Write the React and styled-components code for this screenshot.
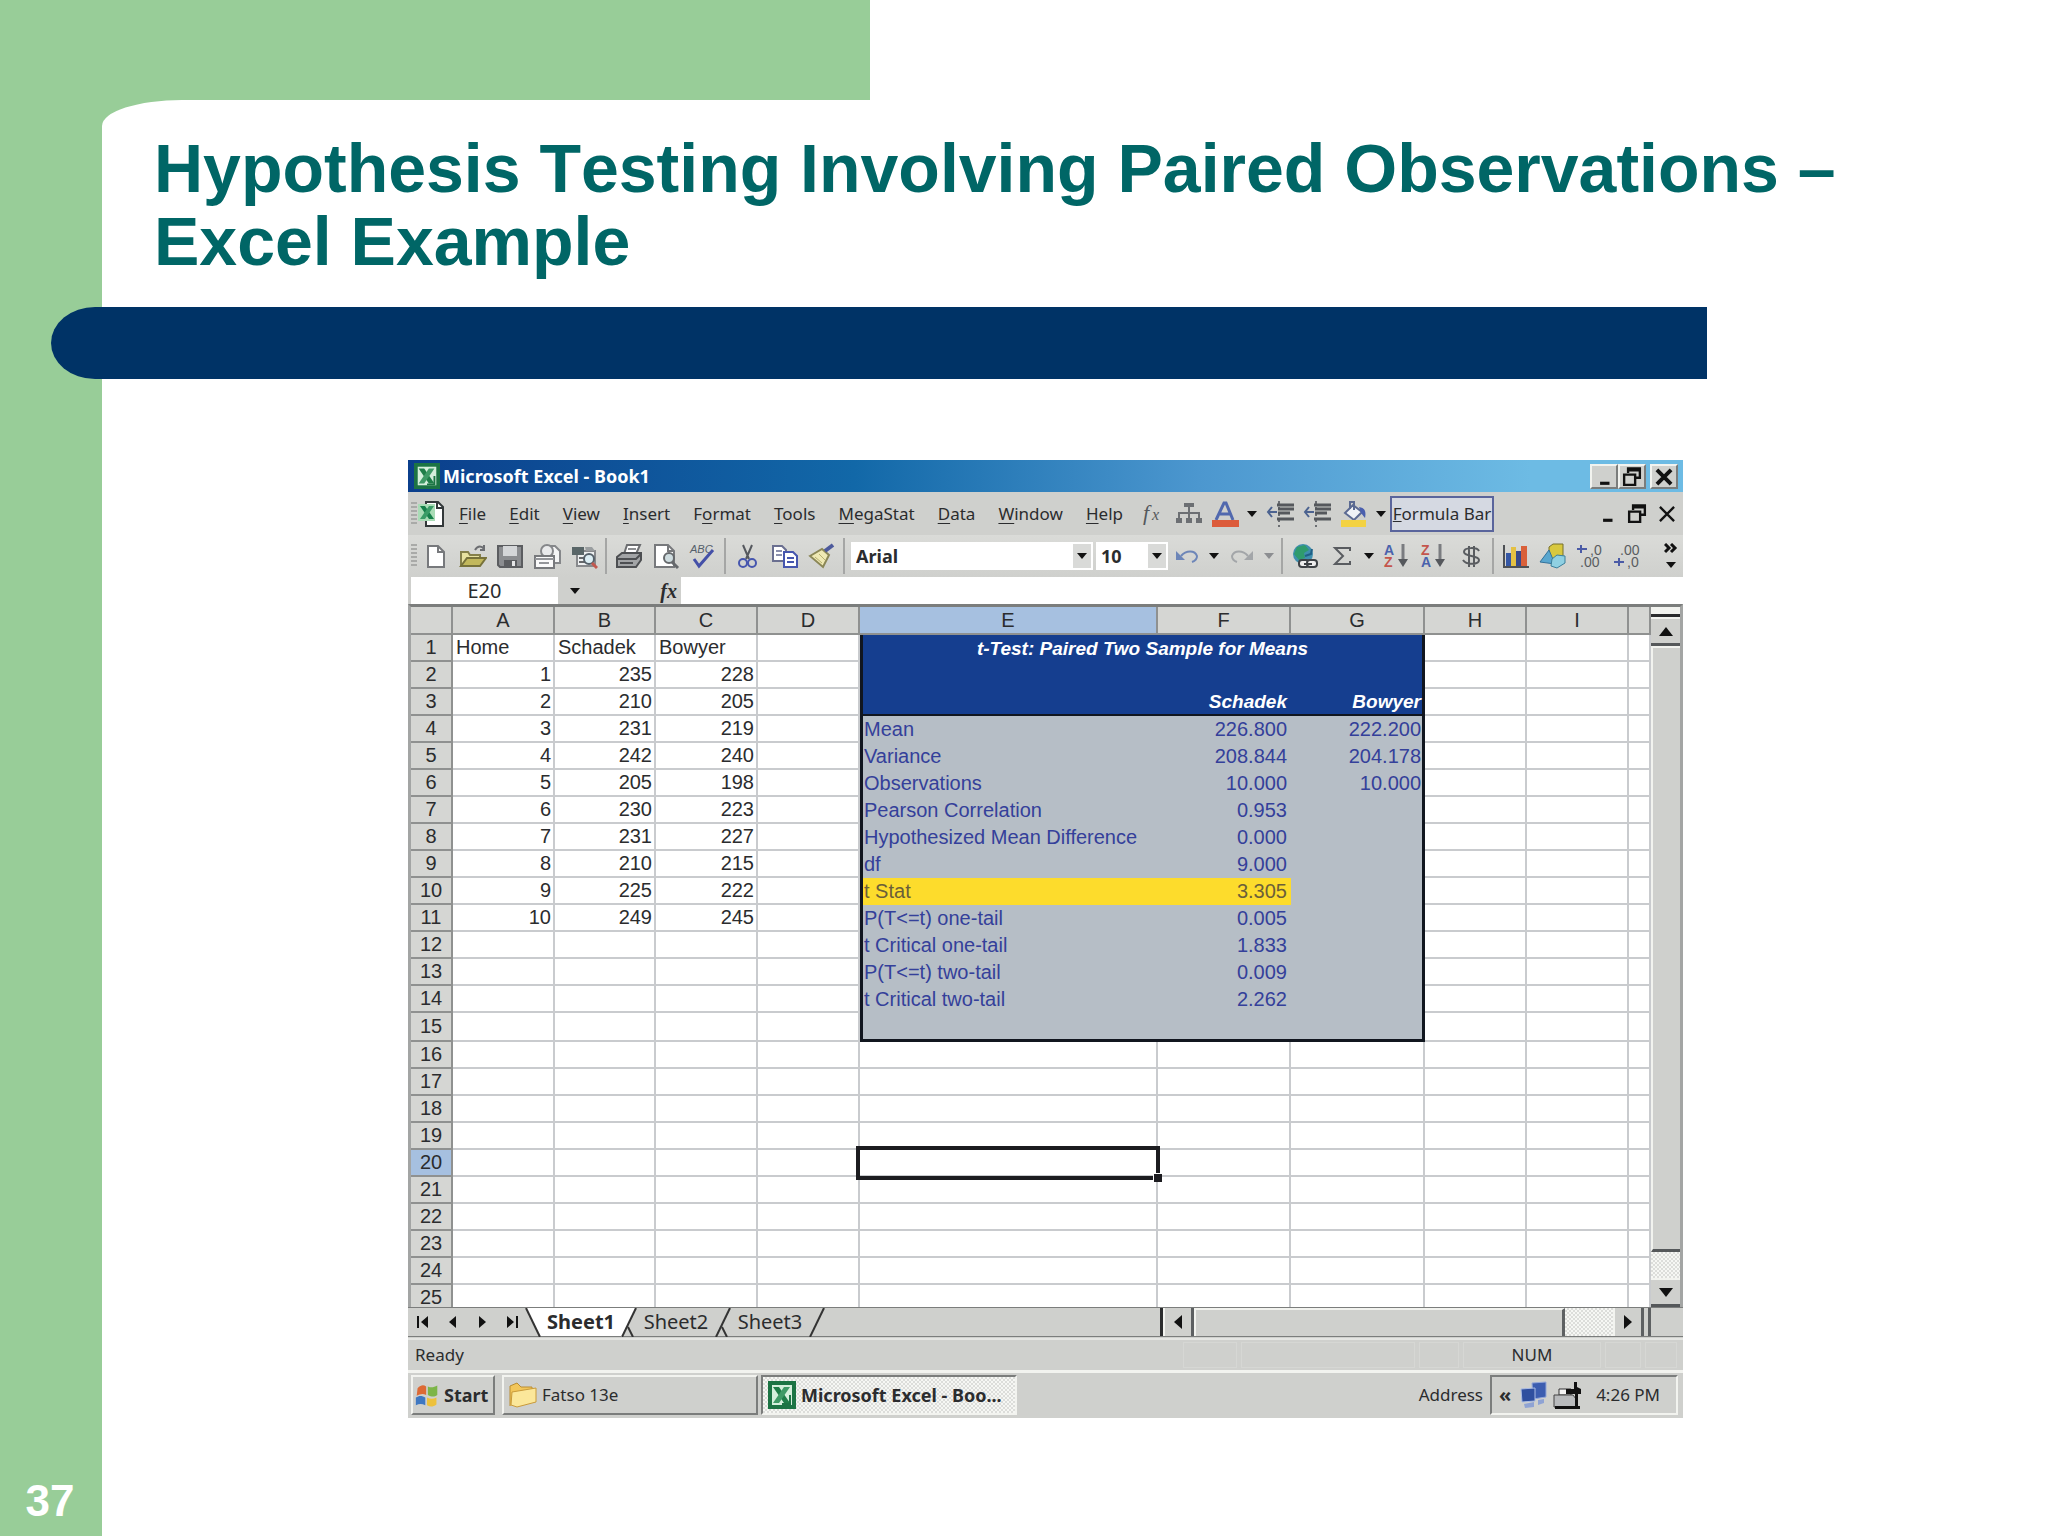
import { Fragment } from "react";
import styled, { createGlobalStyle, css } from "styled-components";

const c = {
  green: "#98cd98",
  navy: "#003366",
  teal: "#006666",
  face: "#cfd0cd",
  light: "#f2f3ef",
  shadow: "#7b7d7c",
  dark: "#2b2c2e",
  line: "#c9cbce",
  blue: "#153e8f",
  steel: "#b6bec6",
  ink: "#34409a",
  yellow: "#fddc2c",
};
const ui = `"Noto Sans", "Open Sans", sans-serif`;
const arial = `"Liberation Sans", Arial, sans-serif`;

const columns = [
  ["A", 102],
  ["B", 101],
  ["C", 102],
  ["D", 102],
  ["E", 298],
  ["F", 133],
  ["G", 134],
  ["H", 102],
  ["I", 102],
];

const scores = [
  ["Home", "Schadek", "Bowyer"],
  [1, 235, 228],
  [2, 210, 205],
  [3, 231, 219],
  [4, 242, 240],
  [5, 205, 198],
  [6, 230, 223],
  [7, 231, 227],
  [8, 210, 215],
  [9, 225, 222],
  [10, 249, 245],
];

// rows 2 to 15 of the t-test output, columns E, F and G
const report = [
  ["", "", ""],
  ["", "Schadek", "Bowyer"],
  ["Mean", "226.800", "222.200"],
  ["Variance", "208.844", "204.178"],
  ["Observations", "10.000", "10.000"],
  ["Pearson Correlation", "0.953", ""],
  ["Hypothesized Mean Difference", "0.000", ""],
  ["df", "9.000", ""],
  ["t Stat", "3.305", ""],
  ["P(T<=t) one-tail", "0.005", ""],
  ["t Critical one-tail", "1.833", ""],
  ["P(T<=t) two-tail", "0.009", ""],
  ["t Critical two-tail", "2.262", ""],
  ["", "", ""],
];

const menus = [
  ["", "F", "ile"],
  ["", "E", "dit"],
  ["", "V", "iew"],
  ["", "I", "nsert"],
  ["F", "o", "rmat"],
  ["", "T", "ools"],
  ["", "M", "egaStat"],
  ["", "D", "ata"],
  ["", "W", "indow"],
  ["", "H", "elp"],
];

/* ---------- icons ---------- */

const Icon = ({ size = 28, children }) => (
  <svg width={size} height={size} viewBox="0 0 28 28" fill="none" aria-hidden="true">
    {children}
  </svg>
);

const ExcelIcon = ({ size }) => (
  <Icon size={size}>
    <path d="M0 0h28v28H0z" fill="#1c7444" />
    <path d="M4 4h20v20H4z" fill="#d5efdc" />
    <path d="M5 6h6l11 16h-6z" fill="#1f7d48" />
    <path d="M16 6h6L11 22H5z" fill="#3f9a66" />
    <path d="M22 14v9h-8" stroke="#1c7444" strokeWidth="2" />
  </Icon>
);

const BookIcon = () => (
  <Icon>
    <path d="M9 2h12l5 5v19H9z" fill="#fff" stroke="#33383a" strokeWidth="2" />
    <path d="M20 2v6h6" stroke="#33383a" strokeWidth="2" />
    <path d="M1 4h17v17H1z" fill="#a9dcb6" />
    <path d="M3 6h5l9 13h-5z" fill="#16804a" />
    <path d="M12 6h5L8 19H3z" fill="#3a9c67" />
  </Icon>
);

const NewIcon = () => (
  <Icon>
    <path d="M6 4h10l6 6v15H6z" fill="#fff" stroke="#77797c" strokeWidth="2" />
    <path d="M16 4v6h6" stroke="#77797c" strokeWidth="2" />
  </Icon>
);

const OpenIcon = () => (
  <Icon>
    <path d="M2 24V10h7l2 3h10v4" fill="#e8e2a0" stroke="#85804a" strokeWidth="2" />
    <path d="M2 24l6-8h19l-6 8z" fill="#c2b85c" stroke="#77723a" strokeWidth="2" />
    <path d="M16 8c3-5 7-4 9-1m0-4v5h-4" stroke="#6c6e72" strokeWidth="2" />
  </Icon>
);

const SaveIcon = () => (
  <Icon>
    <path d="M2 4h24v21H4l-2-2z" fill="#8b8d90" stroke="#5b5d60" strokeWidth="2" />
    <path d="M7 4h14v10H7z" fill="#d4d6d8" />
    <path d="M8 18h13v7H8z" fill="#5c5e61" />
    <path d="M16 19h3v5h-3z" fill="#e6e7e8" />
  </Icon>
);

const MailIcon = () => (
  <Icon>
    <path d="M12 4h10l5 5v12H12z" fill="#f4f5f5" stroke="#85878a" strokeWidth="2" />
    <circle cx="14" cy="9" r="6" fill="#e9eaeb" stroke="#85878a" strokeWidth="2" />
    <path d="M2 14h19v12H2z" fill="#fafafa" stroke="#77797c" strokeWidth="2" />
    <path d="M2 17h19M6 21h10" stroke="#94969a" strokeWidth="2" />
  </Icon>
);

const SearchIcon = () => (
  <Icon>
    <path d="M7 9h18v15H7z" fill="#eef0f1" stroke="#87898c" strokeWidth="2" />
    <path d="M2 5h12v8H2z" fill="#596668" />
    <path d="M15 5h7l3 4h-9z" fill="#9a9ea0" />
    <path d="M9 16h6M9 20h6" stroke="#66696c" strokeWidth="2" />
    <circle cx="19" cy="17" r="5" fill="#dceef4" stroke="#55616a" strokeWidth="2" />
    <path d="M22 21l5 5" stroke="#c2584f" strokeWidth="3" />
  </Icon>
);

const PrintIcon = () => (
  <Icon>
    <path d="M9 12l3-9h13l-4 9z" fill="#fff" stroke="#6b6d70" strokeWidth="2" />
    <path d="M13 7h8" stroke="#8b8d90" strokeWidth="2" />
    <path d="M2 15l5-4h19v7l-5 7H2z" fill="#a2a4a6" stroke="#4d4f52" strokeWidth="2" />
    <path d="M2 17h19l5-5M5 21h13" stroke="#4d4f52" strokeWidth="2" />
  </Icon>
);

const PreviewIcon = () => (
  <Icon>
    <path d="M3 3h13l6 6v16H3z" fill="#fff" stroke="#77797c" strokeWidth="2" />
    <path d="M16 3v6h6" stroke="#77797c" strokeWidth="2" />
    <circle cx="17" cy="16" r="5" fill="#cfdde0" stroke="#66696c" strokeWidth="2" />
    <path d="M20 20l6 6" stroke="#66696c" strokeWidth="3" />
  </Icon>
);

const SpellIcon = () => (
  <Icon>
    <text x="1" y="11" fontFamily={arial} fontSize="11" fontStyle="italic" fill="#55606c">
      ABC
    </text>
    <path d="M5 17l5 7L24 8" stroke="#4450a8" strokeWidth="3" />
  </Icon>
);

const CutIcon = () => (
  <Icon>
    <path d="M9 3l6 14M18 3l-6 14" stroke="#55585e" strokeWidth="2" />
    <circle cx="9" cy="21" r="4" stroke="#4656ae" strokeWidth="2" />
    <circle cx="18" cy="21" r="4" stroke="#4656ae" strokeWidth="2" />
  </Icon>
);

const CopyIcon = () => (
  <Icon>
    <path d="M2 4h9l4 4v11H2z" fill="#fff" stroke="#6a6f90" strokeWidth="2" />
    <path d="M5 9h6M5 13h6" stroke="#8a8fac" strokeWidth="2" />
    <path d="M13 10h9l4 4v11H13z" fill="#fff" stroke="#4656ae" strokeWidth="2" />
    <path d="M16 16h7M16 20h7" stroke="#4656ae" strokeWidth="2" />
  </Icon>
);

const PainterIcon = () => (
  <Icon>
    <path d="M2 14l12-7 7 6-6 12z" fill="#efe9b4" stroke="#8b8757" strokeWidth="2" />
    <path d="M7 15l7 6M11 12l6 6" stroke="#b7b070" strokeWidth="1" />
    <path d="M17 9l8-6" stroke="#4d5a9c" strokeWidth="4" />
  </Icon>
);

const UndoIcon = ({ color = "#6d86b8", flip }) => (
  <Icon>
    <g transform={flip ? "translate(28 0) scale(-1 1)" : undefined}>
      <path d="M8 14c5-6 14-6 16 0 0 3-2 5-5 6" stroke={color} strokeWidth="2" />
      <path d="M3 9v9h9z" fill={color} />
    </g>
  </Icon>
);

const GlobeIcon = () => (
  <Icon>
    <circle cx="12" cy="12" r="10" fill="#3f8fae" />
    <path d="M6 5l8-2 4 5-5 3 1 5-6 2-5-6z" fill="#2f9b6d" />
    <path d="M14 14l6-2 1-5" stroke="#1f5f86" strokeWidth="2" />
    <rect x="8" y="18" width="10" height="7" rx="3" fill="#eee" stroke="#3d4145" strokeWidth="2" />
    <rect x="16" y="18" width="10" height="7" rx="3" fill="#eee" stroke="#3d4145" strokeWidth="2" />
    <path d="M13 22h8" stroke="#3d4145" strokeWidth="2" />
  </Icon>
);

const SigmaIcon = () => (
  <Icon>
    <path d="M22 9V6H7l8 8-8 8h15v-3" stroke="#595c60" strokeWidth="2" />
  </Icon>
);

const SortIcon = ({ top, bottom }) => (
  <Icon>
    <text x="1" y="13" fontFamily={arial} fontSize="14" fontWeight="700" fill={top === "A" ? "#4a62ac" : "#c4554c"}>
      {top}
    </text>
    <text x="1" y="25" fontFamily={arial} fontSize="14" fontWeight="700" fill={bottom === "A" ? "#4a62ac" : "#c4554c"}>
      {bottom}
    </text>
    <path d="M20 2v16" stroke="#7a7c80" strokeWidth="3" />
    <path d="M15 17h10l-5 8z" fill="#55585c" />
  </Icon>
);

const DollarIcon = () => (
  <Icon>
    <path d="M22 9c-2-4-15-4-15 1s15 3 15 8-13 5-16 0M12 4v21M17 4v21" stroke="#595c60" strokeWidth="2" />
  </Icon>
);

const ChartIcon = () => (
  <Icon>
    <path d="M2 3v22h25" stroke="#4d5054" strokeWidth="2" />
    <path d="M4 11h5v13H4z" fill="#3557a5" />
    <path d="M9 5h5v19H9z" fill="#e4c144" />
    <path d="M14 9h5v15h-5z" fill="#36498c" />
    <path d="M19 4h6v20h-6z" fill="#d9603a" />
  </Icon>
);

const ShapesIcon = () => (
  <Icon>
    <path d="M10 5l4-3h10v12l-3 3H10z" fill="#d8c83f" stroke="#77702c" />
    <path d="M1 20L10 8l6 14z" fill="#5aa7cf" stroke="#33719a" />
    <path d="M13 17l5-4 8 1v7l-8 5-6-2z" fill="#8fd0e2" stroke="#3b7f9b" />
  </Icon>
);

const DecimalIcon = ({ more }) => (
  <Icon>
    <g fontFamily={arial} fontSize="14" fill="#595c60">
      <text x={more ? 7 : 14} y="13">{more ? ".00" : ",0"}</text>
      <text x={more ? 14 : 4} y="25">{more ? ",0" : ".00"}</text>
    </g>
    <path d={more ? "M1 20h10M6 16v8" : "M1 7h10M5 3v8"} stroke="#4b5ba6" strokeWidth="2" />
  </Icon>
);

const FxIcon = () => (
  <Icon>
    <text x="6" y="20" fontFamily="Liberation Serif, serif" fontSize="22" fontStyle="italic" fill="#54585c">
      f
    </text>
    <text x="15" y="20" fontFamily="Liberation Serif, serif" fontSize="16" fontStyle="italic" fill="#54585c">
      x
    </text>
  </Icon>
);

const OrgIcon = () => (
  <Icon>
    <path d="M10 3h10v4H10zM2 18h6v5H2zM12 18h6v5h-6zM22 18h6v5h-6z" fill="#6c6f73" />
    <path d="M15 7v12M5 18v-5h20v5" stroke="#6c6f73" strokeWidth="2" />
  </Icon>
);

const FontColorIcon = () => (
  <Icon>
    <path d="M5 20L13 3h2l7 17M9 14h10" stroke="#5168ae" strokeWidth="3" />
    <path d="M1 20h27v7H1z" fill="#dc5b3b" />
  </Icon>
);

const IndentIcon = () => (
  <Icon>
    <path d="M13 1v26" stroke="#6c6f73" strokeWidth="2" strokeDasharray="3 3" />
    <path d="M11 5h17M12 9h16M12 13h12M11 19h17" stroke="#55585c" strokeWidth="3" />
    <path d="M2 12h9M6 7l-4 5 4 5" stroke="#4c6390" strokeWidth="2" />
  </Icon>
);

const BucketIcon = () => (
  <Icon>
    <path d="M5 13l8-8 9 7-8 8z" fill="#eff2f6" stroke="#5b6a92" strokeWidth="2" />
    <path d="M10 9V2h4v8" stroke="#5b6a92" strokeWidth="2" />
    <path d="M19 7c7 1 7 6 6 11l-4-5z" fill="#4a5fae" />
    <path d="M1 20h25v7H1z" fill="#f3d243" />
  </Icon>
);

const MinIcon = () => (
  <Icon size={22}>
    <path d="M9 22h12" stroke="#111" strokeWidth="4" />
  </Icon>
);

const RestoreIcon = () => (
  <Icon size={22}>
    <path d="M9 9V3h15v12h-6" stroke="#111" strokeWidth="3" />
    <path d="M9 5h15" stroke="#111" strokeWidth="4" />
    <path d="M4 11h14v13H4z" stroke="#111" strokeWidth="3" />
  </Icon>
);

const CloseIcon = ({ weight = 5 }) => (
  <Icon size={22}>
    <path d="M5 5l18 18M23 5L5 23" stroke="#111" strokeWidth={weight} />
  </Icon>
);

const StartIcon = () => (
  <Icon size={24}>
    <path d="M3 6c4-4 7-4 10-2v10c-4-2-7-1-11 1z" fill="#dd6a35" />
    <path d="M15 4c4 2 7 1 11-1v11c-4 3-7 2-11 0z" fill="#7db548" />
    <path d="M1 17c4-3 8-2 11 0v9c-4-2-7-2-11 0z" fill="#3f78c2" />
    <path d="M14 17c4 2 7 2 11 0v8c-4 3-7 3-11 1z" fill="#edc13c" />
  </Icon>
);

const FolderIcon = () => (
  <Icon>
    <path d="M1 25V5l7-3 4 4h11v5" fill="#f2c65a" stroke="#b98c31" />
    <path d="M3 11l24-4v14L8 26l-6-2z" fill="#fbe79a" stroke="#c99a3a" />
  </Icon>
);

const NetworkIcon = () => (
  <Icon>
    <path d="M12 2l14-1v15l-13 2z" fill="#3c5db0" stroke="#93a7d8" />
    <path d="M1 8l14-1v13L2 21z" fill="#2f4f9f" stroke="#a9bbe4" />
    <path d="M4 23l10-2v5l-9 1zM18 19l6-1v4l-6 2z" fill="#8fa3d4" />
  </Icon>
);

const TrayPrinterIcon = () => (
  <Icon>
    <path d="M6 8h12v6H6z" fill="#f4f4f4" stroke="#333" />
    <path d="M1 14h19l3 4v8H1z" fill="#b9bbbd" stroke="#444" />
    <path d="M2 25h25v3H2z" fill="#111" />
    <path d="M21 1h3v5l4 2v5h-3v12h-3V13h-9V8h8z" fill="#111" />
  </Icon>
);

const Arrow = ({ d, w = 12, h = 14 }) => (
  <svg width={w} height={h} viewBox={`0 0 ${w} ${h}`} aria-hidden="true">
    <path d={d} fill="#111" />
  </svg>
);

const Caret = ({ color = "#111" }) => (
  <svg width="10" height="6" viewBox="0 0 10 6" aria-hidden="true">
    <path d="M0 0h10L5 6z" fill={color} />
  </svg>
);

/* ---------- window parts ---------- */

function MenuBar() {
  return (
    <MenuRow>
      <Grip />
      <BookIcon />
      <MenuList>
        {menus.map(([before, key, after]) => (
          <MenuButton key={before + key + after}>
            {before}
            <u>{key}</u>
            {after}
          </MenuButton>
        ))}
      </MenuList>
      <ToolButton aria-label="Insert function"><FxIcon /></ToolButton>
      <ToolButton aria-label="Diagram"><OrgIcon /></ToolButton>
      <ToolButton aria-label="Font color"><FontColorIcon /></ToolButton>
      <CaretButton aria-label="Font color list"><Caret /></CaretButton>
      <ToolButton aria-label="Decrease indent"><IndentIcon /></ToolButton>
      <ToolButton aria-label="Increase indent"><IndentIcon /></ToolButton>
      <ToolButton aria-label="Fill color"><BucketIcon /></ToolButton>
      <CaretButton aria-label="Fill color list"><Caret /></CaretButton>
      <ActiveButton>
        <u>F</u>ormula Bar
      </ActiveButton>
      <BookControls>
        <PlainButton aria-label="Minimize book"><MinIcon /></PlainButton>
        <PlainButton aria-label="Restore book"><RestoreIcon /></PlainButton>
        <PlainButton aria-label="Close book"><CloseIcon weight={3} /></PlainButton>
      </BookControls>
    </MenuRow>
  );
}

function ToolBar() {
  return (
    <ToolRow>
      <Grip />
      <ToolButton aria-label="New"><NewIcon /></ToolButton>
      <ToolButton aria-label="Open"><OpenIcon /></ToolButton>
      <ToolButton aria-label="Save"><SaveIcon /></ToolButton>
      <ToolButton aria-label="E-mail"><MailIcon /></ToolButton>
      <ToolButton aria-label="Search"><SearchIcon /></ToolButton>
      <Separator />
      <ToolButton aria-label="Print"><PrintIcon /></ToolButton>
      <ToolButton aria-label="Print preview"><PreviewIcon /></ToolButton>
      <ToolButton aria-label="Spelling"><SpellIcon /></ToolButton>
      <Separator />
      <ToolButton aria-label="Cut"><CutIcon /></ToolButton>
      <ToolButton aria-label="Copy"><CopyIcon /></ToolButton>
      <ToolButton aria-label="Format painter"><PainterIcon /></ToolButton>
      <Separator />
      <Combo $width={242}>
        <select aria-label="Font" defaultValue="Arial">
          <option>Arial</option>
        </select>
        <span><Caret /></span>
      </Combo>
      <Combo $width={72}>
        <select aria-label="Font size" defaultValue="10">
          <option>10</option>
        </select>
        <span><Caret /></span>
      </Combo>
      <ToolButton aria-label="Undo"><UndoIcon /></ToolButton>
      <CaretButton aria-label="Undo list"><Caret /></CaretButton>
      <ToolButton aria-label="Redo"><UndoIcon flip color="#a3a6a9" /></ToolButton>
      <CaretButton aria-label="Redo list"><Caret color="#8c8e91" /></CaretButton>
      <Separator />
      <ToolButton aria-label="Insert hyperlink"><GlobeIcon /></ToolButton>
      <ToolButton aria-label="AutoSum"><SigmaIcon /></ToolButton>
      <CaretButton aria-label="AutoSum list"><Caret /></CaretButton>
      <ToolButton aria-label="Sort ascending"><SortIcon top="A" bottom="Z" /></ToolButton>
      <ToolButton aria-label="Sort descending"><SortIcon top="Z" bottom="A" /></ToolButton>
      <ToolButton aria-label="Currency style"><DollarIcon /></ToolButton>
      <Separator />
      <ToolButton aria-label="Chart wizard"><ChartIcon /></ToolButton>
      <ToolButton aria-label="Drawing"><ShapesIcon /></ToolButton>
      <ToolButton aria-label="Increase decimal"><DecimalIcon /></ToolButton>
      <ToolButton aria-label="Decrease decimal"><DecimalIcon more /></ToolButton>
      <MoreButton aria-label="Toolbar options">
        <svg width="14" height="26" viewBox="0 0 14 26" fill="none" aria-hidden="true">
          <path d="M1 1l4 4-4 4M7 1l4 4-4 4" stroke="#111" strokeWidth="3" />
          <path d="M2 19h10l-5 6z" fill="#111" />
        </svg>
      </MoreButton>
    </ToolRow>
  );
}

function ReportCells({ row }) {
  if (row === 1) {
    return (
      <ReportCell colSpan={3} $tone="head" $align="center" $left $right>
        t-Test: Paired Two Sample for Means
      </ReportCell>
    );
  }
  const tone = row <= 3 ? "head" : "body";
  const [label, first, second] = report[row - 2];
  const edge = { $rule: row === 3, $last: row === 15 };
  const hit = label === "t Stat";
  return (
    <>
      <ReportCell $tone={hit ? "hit" : tone} $left {...edge}>{label}</ReportCell>
      <ReportCell $tone={hit ? "hit" : tone} $align="right" {...edge}>{first}</ReportCell>
      <ReportCell $tone={tone} $align="right" $right {...edge}>{second}</ReportCell>
    </>
  );
}

function Grid() {
  const rows = Array.from({ length: 25 }, (_, i) => i + 1);
  return (
    <Viewport>
      <Table>
        <colgroup>
          <Col $width={42} />
          {columns.map(([name, width]) => (
            <Col key={name} $width={width} />
          ))}
          <col />
        </colgroup>
        <thead>
          <tr>
            <Head />
            {columns.map(([name]) => (
              <Head key={name} scope="col" $active={name === "E"}>{name}</Head>
            ))}
            <Head />
          </tr>
        </thead>
        <tbody>
          {rows.map((row) => (
            <Row key={row} $tall={row === 15}>
              <Head scope="row" $active={row === 20}>{row}</Head>
              {[0, 1, 2].map((i) => (
                <Cell key={i} $align={row > 1 ? "right" : "left"}>{scores[row - 1]?.[i]}</Cell>
              ))}
              <Cell />
              {row <= 15 ? (
                <ReportCells row={row} />
              ) : (
                <Fragment>
                  <Cell>{row === 20 && <Cursor />}</Cell>
                  <Cell />
                  <Cell />
                </Fragment>
              )}
              <Cell />
              <Cell />
              <Cell />
            </Row>
          ))}
        </tbody>
      </Table>
    </Viewport>
  );
}

const Slant = ({ first, last, active }) => (
  <svg width="16" height="29" viewBox="0 0 16 29" fill="none" aria-hidden="true">
    {first ? (
      <>
        <path d="M1 0h15v29z" fill="#fff" />
        <path d="M1 0l14 29" stroke="#333" strokeWidth="2" />
      </>
    ) : (
      <>
        {active && <path d="M0 0h15L1 29H0z" fill="#fff" />}
        <path d="M15 0L1 29" stroke="#333" strokeWidth="2" />
        {!last && <path d="M7 19l5 10" stroke="#333" strokeWidth="2" />}
      </>
    )}
  </svg>
);

function SheetBar() {
  return (
    <SheetRow>
      <SheetNav>
        <PlainButton aria-label="First sheet"><Arrow d="M0 1h2v12H0zM11 1v12L4 7z" /></PlainButton>
        <PlainButton aria-label="Previous sheet"><Arrow d="M9 1v12L2 7z" /></PlainButton>
        <PlainButton aria-label="Next sheet"><Arrow d="M3 1v12l7-6z" /></PlainButton>
        <PlainButton aria-label="Last sheet"><Arrow d="M10 1h2v12h-2zM1 1v12l7-6z" /></PlainButton>
      </SheetNav>
      <Slant first />
      <SheetTab $active>Sheet1</SheetTab>
      <Slant active />
      <SheetTab>Sheet2</SheetTab>
      <Slant />
      <SheetTab>Sheet3</SheetTab>
      <Slant last />
      <HScroll>
        <HButton aria-label="Scroll left"><Arrow d="M10 0v14L2 7z" /></HButton>
        <HThumb />
        <HTrack />
        <HButton aria-label="Scroll right"><Arrow d="M2 0v14l8-7z" /></HButton>
      </HScroll>
      <Corner />
    </SheetRow>
  );
}

export default function App() {
  return (
    <>
      <GlobalStyle />
      <Slide>
        <Rail>37</Rail>
        <Main>
          <Paper>
            <Title>Hypothesis Testing Involving Paired Observations – Excel Example</Title>
            <Bar />
            <Window>
              <TitleBar>
                <ExcelIcon size={26} />
                <strong>Microsoft Excel - Book1</strong>
                <WindowButton aria-label="Minimize"><MinIcon /></WindowButton>
                <WindowButton aria-label="Restore"><RestoreIcon /></WindowButton>
                <WindowButton aria-label="Close" $apart><CloseIcon /></WindowButton>
              </TitleBar>
              <MenuBar />
              <ToolBar />
              <FormulaRow>
                <NameBox aria-label="Name box" defaultValue="E20" />
                <FormulaTools>
                  <Caret />
                  <em>fx</em>
                </FormulaTools>
                <FormulaInput aria-label="Formula" />
              </FormulaRow>
              <Workspace>
                <Grid />
                <VScroll>
                  <Split />
                  <VButton aria-label="Scroll up"><Arrow w={14} h={9} d="M0 9h14L7 0z" /></VButton>
                  <VThumb />
                  <VTrack />
                  <VButton aria-label="Scroll down"><Arrow w={14} h={9} d="M0 0h14L7 9z" /></VButton>
                </VScroll>
              </Workspace>
              <SheetBar />
              <StatusRow>
                <span>Ready</span>
                <Pane $width={54} />
                <Pane $width={174} />
                <Pane $width={40} />
                <Pane $width={138}>NUM</Pane>
                <Pane $width={36} />
                <Pane $width={32} />
              </StatusRow>
              <TaskBar>
                <StartButton>
                  <StartIcon />
                  Start
                </StartButton>
                <TaskButton>
                  <FolderIcon />
                  Fatso 13e
                </TaskButton>
                <TaskButton $pressed>
                  <ExcelIcon />
                  Microsoft Excel - Boo...
                </TaskButton>
                <Address>Address</Address>
                <Tray>
                  <Chevrons>«</Chevrons>
                  <NetworkIcon />
                  <TrayPrinterIcon />
                  <time>4:26 PM</time>
                </Tray>
              </TaskBar>
            </Window>
          </Paper>
        </Main>
      </Slide>
    </>
  );
}

/* ---------- styles ---------- */

const GlobalStyle = createGlobalStyle`
  * {
    box-sizing: border-box;
  }
  body {
    margin: 0;
    background: #fff;
  }
  button, input, select {
    font: inherit;
    color: inherit;
    margin: 0;
    padding: 0;
    border: 0;
    background: none;
  }
  svg {
    display: block;
    flex: none;
  }
`;

const dots = css`
  background: repeating-conic-gradient(#dcddda 0 25%, #f6f7f4 0 50%) 0 0 / 4px 4px;
`;
const raised = css`
  background: ${c.face};
  border: 2px solid;
  border-color: ${c.light} ${c.shadow} ${c.shadow} ${c.light};
`;

const Slide = styled.div`
  display: grid;
  grid-template-columns: 102px 1fr;
  min-height: 100vh;
`;
const Rail = styled.aside`
  display: flex;
  align-items: flex-end;
  justify-content: center;
  padding: 0 2px 10px 0;
  background: ${c.green};
  color: #fff;
  font: 700 44px/50px ${arial};
`;
const Main = styled.main`
  padding-top: 100px;
  background: linear-gradient(${c.green}, ${c.green}) no-repeat 0 0 / 768px 140px;
`;
const Paper = styled.section`
  height: 100%;
  padding-top: 32px;
  background: #fff;
  border-top-left-radius: 80px 26px;
`;
const Title = styled.h1`
  margin: 0;
  padding: 0 150px 0 52px;
  color: ${c.teal};
  font: 700 68px/73px ${arial};
  font-kerning: none;
`;
const Bar = styled.div`
  height: 72px;
  margin: 29px 341px 81px -51px;
  background: ${c.navy};
  border-radius: 44px 0 0 44px / 36px;
`;

const Window = styled.div`
  margin: 0 365px 0 306px;
  background: ${c.face};
  color: ${c.dark};
  font: 17px/24px ${ui};
`;
const TitleBar = styled.header`
  display: flex;
  align-items: center;
  height: 32px;
  padding: 0 5px 0 6px;
  background: linear-gradient(90deg, #0b3f8c, #1268a8 35%, #4c97cf 62%, #6dbbe4 88%);
  color: #fff;
  strong {
    flex: 1;
    padding-left: 3px;
    font-size: 18px;
  }
`;
const WindowButton = styled.button`
  ${raised}
  display: grid;
  place-items: center;
  width: 28px;
  height: 25px;
  margin-left: ${(p) => (p.$apart ? 4 : 0)}px;
`;
const MenuRow = styled.nav`
  display: flex;
  align-items: center;
  height: 43px;
  padding: 0 5px 0 3px;
`;
const Grip = styled.span`
  flex: none;
  width: 6px;
  height: 24px;
  background: repeating-linear-gradient(#a9aaa8 0 2px, transparent 2px 4px);
`;
const MenuList = styled.div`
  display: flex;
  justify-content: space-between;
  width: 664px;
  margin: 0 9px 0 14px;
`;
const MenuButton = styled.button`
  text-underline-offset: 3px;
`;
const ToolButton = styled.button`
  display: flex;
  flex: none;
  align-items: center;
  justify-content: center;
  width: 37px;
  height: 36px;
`;
const CaretButton = styled(ToolButton)`
  width: 18px;
`;
const ActiveButton = styled.button`
  width: 104px;
  height: 36px;
  background: #d5d9e2;
  border: 2px solid #5a659c;
  white-space: nowrap;
`;
const BookControls = styled.div`
  display: flex;
  gap: 8px;
  margin-left: auto;
`;
const PlainButton = styled.button`
  display: grid;
  place-items: center;
`;
const ToolRow = styled.div`
  display: flex;
  align-items: center;
  height: 42px;
  padding: 0 5px 0 3px;
  background: linear-gradient(#dadbd8, ${c.face});
`;
const Separator = styled.span`
  flex: none;
  width: 2px;
  height: 36px;
  margin: 0 3px;
  background: #a5a6a5;
`;
const Combo = styled.div`
  display: flex;
  flex: none;
  width: ${(p) => p.$width}px;
  height: 28px;
  margin-left: 3px;
  padding: 2px;
  background: #fff;
  font-size: 18px;
  font-weight: 700;
  select {
    flex: 1;
    min-width: 0;
    padding-left: 3px;
    appearance: none;
  }
  span {
    display: grid;
    place-items: center;
    width: 18px;
    background: #d9dad8;
  }
`;
const MoreButton = styled(ToolButton)`
  width: 14px;
  margin-left: auto;
`;

const FormulaRow = styled.div`
  display: flex;
  height: 27px;
  padding-left: 3px;
  font-size: 20px;
`;
const NameBox = styled.input`
  width: 147px;
  background: #fff;
  text-align: center;
`;
const FormulaTools = styled.div`
  display: flex;
  align-items: center;
  justify-content: space-between;
  width: 123px;
  padding: 0 4px 0 12px;
  em {
    font: italic 700 20px/24px "Liberation Serif", serif;
  }
`;
const FormulaInput = styled.input`
  flex: 1;
  background: #fff;
`;

const Workspace = styled.div`
  display: flex;
  height: 703px;
  border: solid #a3a5a4;
  border-width: 3px 3px 0;
  border-top-color: #7b7d7c;
`;
const Viewport = styled.div`
  flex: 1;
  overflow: hidden;
`;
const Table = styled.table`
  width: 100%;
  table-layout: fixed;
  border-collapse: separate;
  border-spacing: 0;
  background: #fff;
  font: 20px/25px ${arial};
`;
const Col = styled.col`
  width: ${(p) => p.$width}px;
`;
const Row = styled.tr`
  height: ${(p) => (p.$tall ? 29 : 27)}px;
`;
const Head = styled.th`
  height: 27px;
  padding: 0;
  background: ${(p) => (p.$active ? "#a6c0e0" : "#d5d6d3")};
  border: solid #8f9190;
  border-width: 0 2px 2px 0;
  font-weight: 400;
  thead & {
    height: 28px;
  }
`;
const Cell = styled.td`
  position: relative;
  padding: 0 2px 0 3px;
  border: solid ${c.line};
  border-width: 0 2px 2px 0;
  text-align: ${(p) => p.$align || "left"};
  white-space: nowrap;
`;
const tones = {
  head: css`
    background: ${c.blue};
    color: #fff;
    font-size: 19px;
    font-weight: 700;
    font-style: italic;
  `,
  body: css`
    background: ${c.steel};
    color: ${c.ink};
  `,
  hit: css`
    background: ${c.yellow};
    color: #6b5f3a;
  `,
};
const ReportCell = styled(Cell)`
  ${(p) => tones[p.$tone]}
  padding: 0 ${(p) => (p.$right ? 1 : 4)}px 0 ${(p) => (p.$left ? 1 : 3)}px;
  border: 0 solid #11161f;
  border-left-width: ${(p) => (p.$left ? 3 : 0)}px;
  border-right-width: ${(p) => (p.$right ? 3 : 0)}px;
  border-bottom-width: ${(p) => (p.$last ? 3 : p.$rule ? 2 : 0)}px;
`;
const Cursor = styled.div`
  position: absolute;
  z-index: 1;
  inset: -4px -4px -5px -4px;
  border: 4px solid #1c1c20;
  &::after {
    content: "";
    position: absolute;
    right: -6px;
    bottom: -6px;
    width: 8px;
    height: 8px;
    background: #1c1c20;
    border: solid #fff;
    border-width: 1px 0 0 1px;
  }
`;

const VScroll = styled.div`
  display: flex;
  flex-direction: column;
  width: 29px;
`;
const Split = styled.div`
  height: 10px;
  background: ${c.light};
  border-bottom: 3px solid ${c.dark};
`;
const VButton = styled.button`
  display: grid;
  place-items: center;
  height: 29px;
  border-bottom: 3px solid #55585a;
  border-top: 2px solid ${c.light};
`;
const VThumb = styled.div`
  flex: 1;
  border: solid ${c.light};
  border-width: 2px 0 3px 2px;
  border-bottom-color: #55585a;
`;
const VTrack = styled.div`
  ${dots}
  height: 26px;
`;

const SheetRow = styled.div`
  display: flex;
  height: 30px;
  padding: 0 3px;
  border-top: 1px solid ${c.shadow};
  border-bottom: 1px solid ${c.shadow};
`;
const SheetNav = styled.div`
  display: flex;
  justify-content: space-between;
  width: 114px;
  padding: 0 7px 0 6px;
`;
const SheetTab = styled.button`
  width: ${(p) => (p.$active ? 80 : 78)}px;
  background: ${(p) => (p.$active ? "#fff" : "none")};
  font-size: 20px;
  font-weight: ${(p) => (p.$active ? 700 : 400)};
`;
const HScroll = styled.div`
  display: flex;
  width: 484px;
  margin-left: auto;
  border-left: 3px solid ${c.dark};
`;
const HButton = styled.button`
  display: grid;
  place-items: center;
  width: 31px;
  border: solid #5d6062;
  border-width: 0 3px 0 0;
  border-left: 2px solid ${c.light};
`;
const HThumb = styled.div`
  flex: 1;
  border: solid ${c.light};
  border-width: 2px 3px 0 2px;
  border-right-color: #5d6062;
`;
const HTrack = styled.div`
  ${dots}
  width: 48px;
`;
const Corner = styled.div`
  width: 32px;
  margin-left: 4px;
  border-left: 3px solid #5d6062;
`;

const StatusRow = styled.footer`
  display: flex;
  align-items: center;
  gap: 4px;
  height: 32px;
  margin-top: 1px;
  padding: 0 6px 0 7px;
  border-top: 2px solid #e4e5e2;
  span {
    flex: 1;
  }
`;
const Pane = styled.div`
  width: ${(p) => p.$width}px;
  height: 26px;
  border: 1px solid #d6d7d4;
  text-align: center;
`;
const TaskBar = styled.div`
  display: flex;
  align-items: center;
  height: 48px;
  padding: 0 5px 2px 3px;
  border-top: 3px solid ${c.light};
`;
const TaskButton = styled.button`
  ${raised}
  display: flex;
  align-items: center;
  gap: 5px;
  width: 256px;
  height: 40px;
  margin-right: 3px;
  padding-left: 5px;
  white-space: nowrap;
  ${(p) =>
    p.$pressed &&
    css`
      ${dots}
      border-color: ${c.shadow} ${c.light} ${c.light} ${c.shadow};
      font-size: 18px;
      font-weight: 700;
    `}
`;
const StartButton = styled(TaskButton)`
  width: 84px;
  margin-right: 7px;
  padding-left: 2px;
  font-size: 18px;
  font-weight: 700;
`;
const Address = styled.span`
  margin: 0 7px 0 auto;
`;
const Tray = styled.div`
  display: flex;
  align-items: center;
  gap: 5px;
  width: 188px;
  height: 40px;
  padding-left: 7px;
  border: 2px solid;
  border-color: ${c.shadow} ${c.light} ${c.light} ${c.shadow};
  time {
    margin: 0 16px 0 auto;
  }
`;
const Chevrons = styled.b`
  width: 16px;
  font-size: 20px;
`;
